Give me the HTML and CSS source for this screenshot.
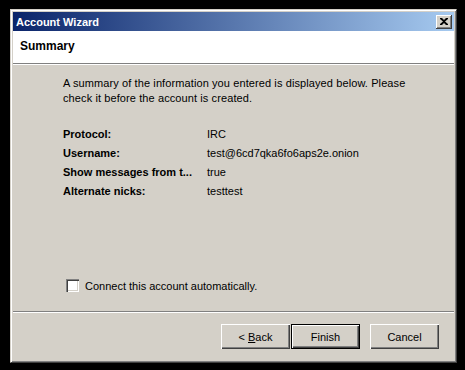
FILE: index.html
```html
<!DOCTYPE html>
<html>
	<head>
		<meta charset="UTF-8">
		<title>Account Wizard</title>
		<link rel="stylesheet" href="styles.css">
	</head>
	<body>
		<div class="window">
			<div class="titlebar">
				<span class="title">Account Wizard</span>
				<span class="close">
					<svg width="8" height="7" viewBox="0 0 8 7"><path d="M0 0h2l2 2 2-2h2v1l-3 2.5 3 2.5v1h-2l-2-2-2 2h-2v-1l3-2.5-3-2.5z" fill="#000"/></svg>
				</span>
			</div>
			<div class="header">Summary</div>
			<div class="sep"></div>
			<div class="content">
				<p class="intro">A summary of the information you entered is displayed below. Please check it before the account is created.</p>
				<div class="rows">
					<div class="label">Protocol:</div>
					<div class="value">IRC</div>
					<div class="label">Username:</div>
					<div class="value">test@6cd7qka6fo6aps2e.onion</div>
					<div class="label">Show messages from t...</div>
					<div class="value">true</div>
					<div class="label">Alternate nicks:</div>
					<div class="value">testtest</div>
				</div>
				<label class="check"><span class="box"></span>Connect this account automatically.</label>
			</div>
			<div class="sep"></div>
			<div class="buttons">
				<button class="btn"><span>&lt; <u>B</u>ack</span></button>
				<button class="btn default"><span>Finish</span></button>
				<button class="btn cancel"><span>Cancel</span></button>
			</div>
		</div>
	</body>
</html>
```

FILE: styles.css
```css
*{
	margin: 0;
	padding: 0;
	box-sizing: border-box;
}
body{
	width: 465px;
	height: 370px;
	background: #000;
	padding: 9px 0 0 10px;
	font-family: "Liberation Sans", Arial, sans-serif;
	font-size: 11px;
	color: #000;
	overflow: hidden;
}
.window{
	display: flex;
	flex-direction: column;
	width: 447px;
	height: 354px;
	padding: 2px;
	background: #d4d0c8;
	border: 1px solid;
	border-color: #d4d0c8 #404040 #404040 #d4d0c8;
	box-shadow: inset 1px 1px #fff, inset -1px -1px #808080;
}
.titlebar{
	display: flex;
	align-items: center;
	justify-content: space-between;
	height: 19px;
	padding: 0 2px 0 3px;
	background: linear-gradient(to right, #0a246a, #a6caf0);
	color: #fff;
	font-weight: bold;
}
.close{
	display: flex;
	align-items: center;
	justify-content: center;
	width: 16px;
	height: 14px;
	background: #d4d0c8;
	box-shadow: inset -1px -1px #404040, inset 1px 1px #fff, inset -2px -2px #808080;
}
.header{
	height: 32px;
	padding: 8px 0 0 7px;
	background: #fff;
	font-weight: bold;
	font-size: 12px;
}
.sep{
	height: 2px;
	border-top: 1px solid #808080;
	border-bottom: 1px solid #fff;
}
.content{
	flex: 1;
	display: flex;
	flex-direction: column;
	padding: 11px 0 0 50px;
}
.intro{
	width: 345px;
	line-height: 15px;
	letter-spacing: 0.1px;
}
.rows{
	display: grid;
	grid-template-columns: 144px auto;
	grid-auto-rows: 19px;
	align-items: center;
	margin-top: 18px;
}
.label{
	font-weight: bold;
	white-space: nowrap;
	overflow: hidden;
}
.check{
	display: flex;
	align-items: center;
	gap: 6px;
	margin: auto 0 19px 3px;
}
.box{
	width: 13px;
	height: 13px;
	background: #fff;
	box-shadow: inset 1px 1px #808080, inset 2px 2px #404040, inset -1px -1px #fff, inset -2px -2px #d4d0c8;
}
.buttons{
	display: flex;
	justify-content: flex-end;
	padding: 11px 15px 11px 0;
}
.btn{
	width: 69px;
	height: 25px;
	background: #d4d0c8;
	border: none;
	font: inherit;
	color: #000;
	box-shadow: inset 1px 1px #fff, inset -1px -1px #404040, inset -2px -2px #808080;
}
.btn.default{
	margin: 0 10px 0 1px;
	border: 1px solid #000;
	box-shadow: inset 1px 1px #fff, inset -1px -1px #404040, inset -2px -2px #808080;
}
```
